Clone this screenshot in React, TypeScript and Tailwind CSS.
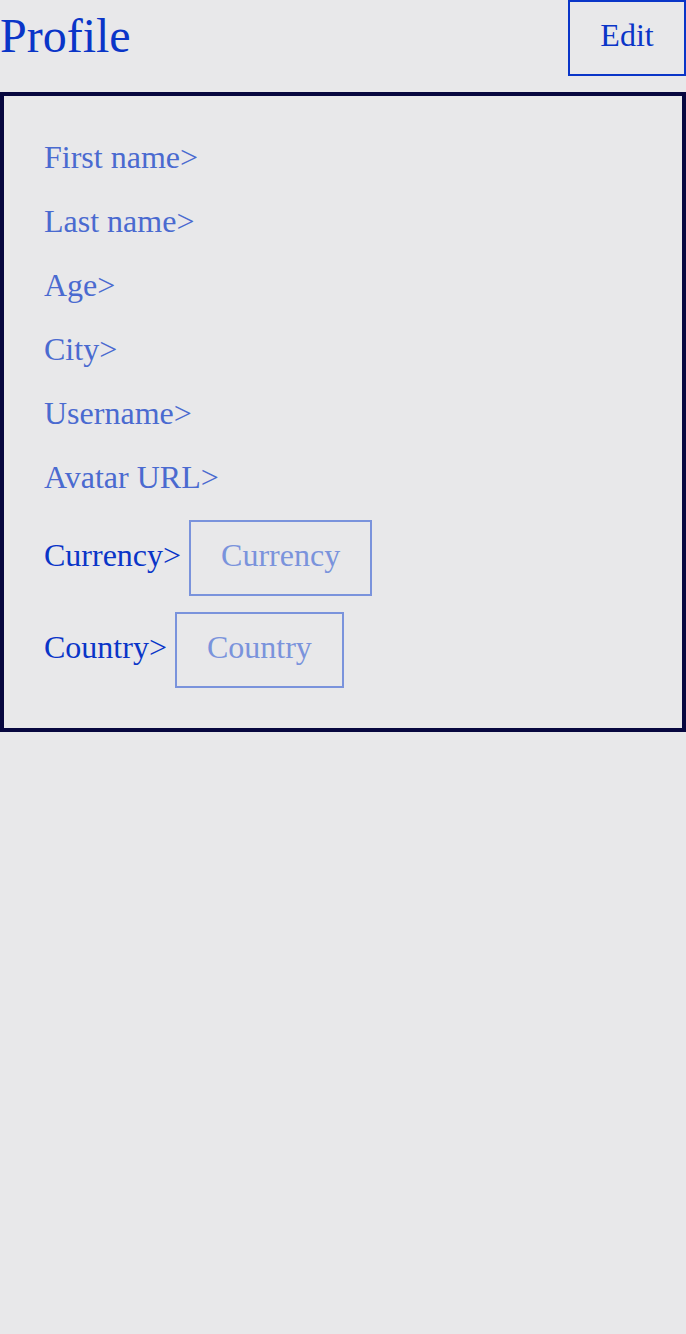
const fields = ["First name", "Last name", "Age", "City", "Username", "Avatar URL"];

const SelectRow = ({ label }: { label: string }) => (
  <div className="flex items-center h-[76px]">
    <span className="pb-[6px] text-[#0a35c8]">{label}&gt;</span>
    <div className="ml-2 h-full flex items-center pb-[6px] px-[30px] border-2 border-[#7a93dc] text-[#7a93dc]">
      {label}
    </div>
  </div>
);

export default function App() {
  return (
    <div className="min-h-[1334px] bg-[#e8e8ea] font-['Liberation_Serif',serif]">
      <header className="flex justify-between items-start h-[92px]">
        <h1 className="text-[48px] leading-none pt-[12px] text-[#0a35c8]">Profile</h1>
        <button className="w-[118px] h-[76px] pb-[6px] border-2 border-[#0a35c8] text-[32px] text-[#0a35c8]">
          Edit
        </button>
      </header>
      <section className="border-4 border-[#07073f] pt-[29px] pb-10 px-10 text-[32px]">
        {fields.map((f) => (
          <div key={f} className="h-16 flex items-center text-[#4a6ad0]">
            {f}&gt;
          </div>
        ))}
        <div className="mt-[11px] flex flex-col gap-4">
          <SelectRow label="Currency" />
          <SelectRow label="Country" />
        </div>
      </section>
    </div>
  );
}
